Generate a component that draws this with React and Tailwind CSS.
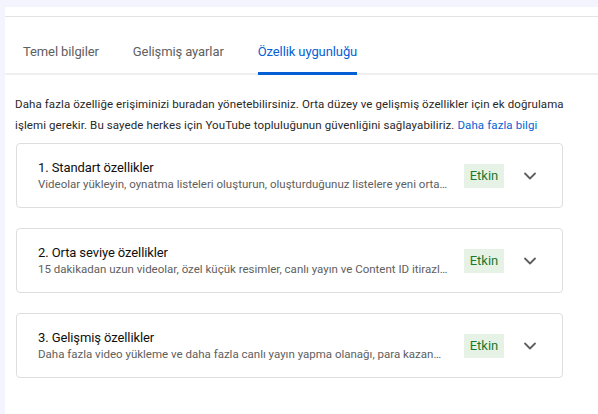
import { ChevronDown } from 'lucide-react';

const features = [
  {
    title: '1. Standart özellikler',
    desc: 'Videolar yükleyin, oynatma listeleri oluşturun, oluşturduğunuz listelere yeni ortak çalışanlar ekleyin',
  },
  {
    title: '2. Orta seviye özellikler',
    desc: '15 dakikadan uzun videolar, özel küçük resimler, canlı yayın ve Content ID itirazlarında bulunma',
  },
  {
    title: '3. Gelişmiş özellikler',
    desc: 'Daha fazla video yükleme ve daha fazla canlı yayın yapma olanağı, para kazanma özelliklerine erişim',
  },
];

function FeatureCard({ title, desc }) {
  return (
    <div className="flex items-center h-[65px] w-[547px] border border-[#dedede] rounded-[4px] pl-[21px] pr-[22px] bg-white">
      <div className="flex flex-col min-w-0 w-[414px] pr-[3px] pt-[1px]">
        <div className="text-[13px] leading-[17px] text-[#0f0f0f] tracking-[-0.1px]">{title}</div>
        <div className="text-[11.5px] leading-[17px] text-[#606060] truncate">{desc}</div>
      </div>
      <span className="ml-[12px] w-[40px] h-[24px] flex items-center justify-center bg-[#e6f2e6] text-[#1c7a2e] text-[13px]">
        Etkin
      </span>
      <ChevronDown className="ml-[16px] w-[20px] h-[20px] text-[#5f5f5f]" strokeWidth={2.2} />
    </div>
  );
}

function App() {
  return (
    <div
      className="w-[598px] h-[414px] bg-[#f4f4fe] pl-[5px] pt-[7px] overflow-hidden"
      style={{ fontFamily: 'Roboto, "Liberation Sans", sans-serif' }}
    >
      <div className="bg-white h-full">
        <div className="h-[10px] border-b border-[#e3e3e3]" />
        <div className="flex items-end h-[58px] border-b-2 border-[#efefef] pl-[18px] text-[13px] tracking-[-0.1px] gap-[34px]">
          <div className="text-[#606060] pb-[12px]">Temel bilgiler</div>
          <div className="text-[#606060] pb-[12px]">Gelişmiş ayarlar</div>
          <div className="text-[#065fd4] pb-[11px] border-b-[3px] border-[#065fd4] rounded-t-[2px] -mb-[2px]">
            Özellik uygunluğu
          </div>
        </div>
        <div className="pl-[10px] pt-[19px]">
          <p className="text-[11.5px] leading-[21px] text-[#282828] w-[552px] tracking-[0.1px]">
            Daha fazla özelliğe erişiminizi buradan yönetebilirsiniz. Orta düzey ve gelişmiş özellikler için ek doğrulama
            işlemi gerekir. Bu sayede herkes için YouTube topluluğunun güvenliğini sağlayabiliriz.{' '}
            <span className="text-[#065fd4]">Daha fazla bilgi</span>
          </p>
          <div className="flex flex-col gap-[20px] mt-[7px] ml-[1px]">
            {features.map((f) => (
              <FeatureCard key={f.title} title={f.title} desc={f.desc} />
            ))}
          </div>
        </div>
      </div>
    </div>
  );
}

export default App;
